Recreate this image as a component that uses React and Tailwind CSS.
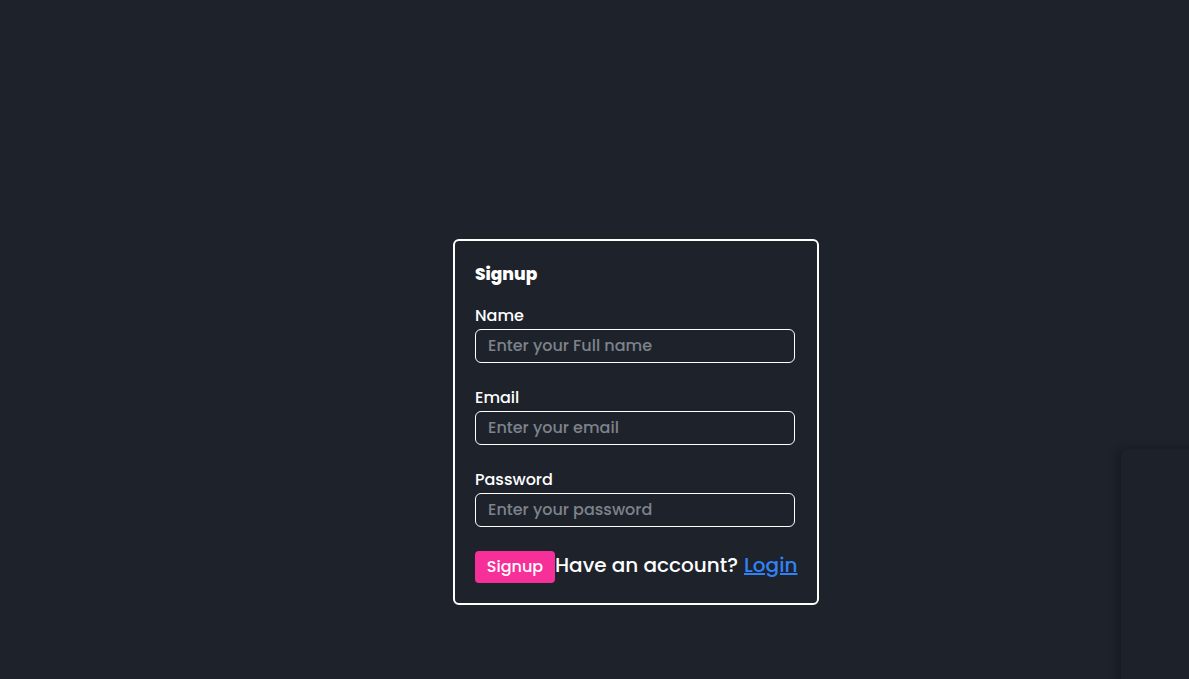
import React from "react";

export default function App() {
  return (
    <div
      className="relative min-h-screen w-full overflow-hidden bg-[#1e222a] text-white"
      style={{ fontFamily: '"Poppins", "Open Sans", "DejaVu Sans", sans-serif' }}
    >
      <div className="pl-[453px] pt-[239px]">
        <form className="w-[366px] rounded-md border-2 border-white px-[20px] pt-[21px] pb-[20px]">
          <h2 className="text-[17px] font-extrabold leading-6">Signup</h2>

          <Field label="Name" placeholder="Enter your Full name" className="mt-5" />
          <Field label="Email" placeholder="Enter your email" className="mt-[25px]" />
          <Field label="Password" placeholder="Enter your password" type="password" className="mt-[25px]" />

          <div className="mt-6 flex items-center whitespace-nowrap">
            <button
              type="button"
              className="h-8 w-20 shrink-0 rounded bg-[#f72f98] text-[16px] font-medium text-white"
            >
              Signup
            </button>
            <span className="-mt-[4px] shrink-0 text-[20px] font-medium leading-7">Have an account?</span>
            <a href="#" className="-mt-[4px] ml-[6px] shrink-0 text-[20px] font-medium leading-7 text-[#3182f6] underline">
              Login
            </a>
          </div>
        </form>
      </div>

      {/* side widget, mostly off screen */}
      <div className="absolute left-[1121px] top-[449px] h-[260px] w-[120px] rounded-tl-lg bg-[#1d2129] shadow-[-4px_0_10px_rgba(0,0,0,0.25)]" />
    </div>
  );
}

function Field({ label, placeholder, type = "text", className = "" }) {
  return (
    <div className={className}>
      <label className="block text-[16px] font-medium leading-5">{label}</label>
      <input
        type={type}
        placeholder={placeholder}
        className="mt-[3px] h-[34px] w-[320px] rounded-md border border-white bg-transparent px-3 pb-[2px] text-[16px] font-medium text-white outline-none placeholder:text-[#7d838c]"
      />
    </div>
  );
}
